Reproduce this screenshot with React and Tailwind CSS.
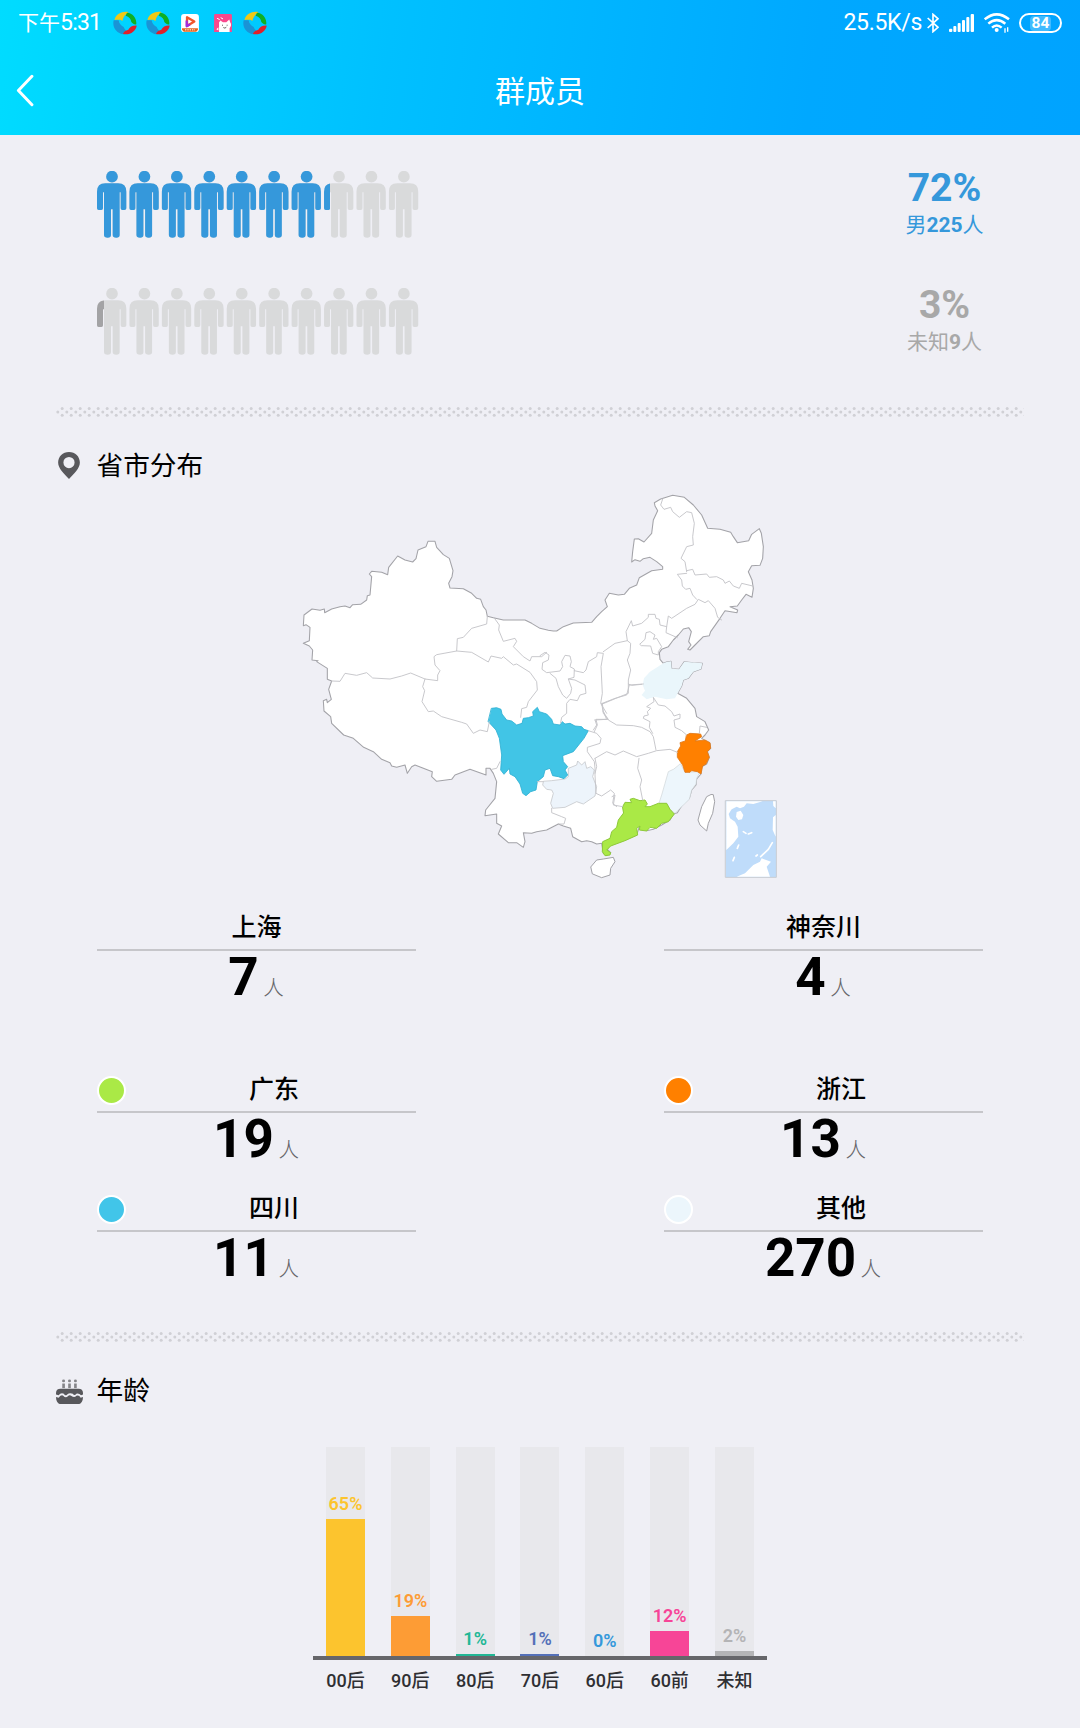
import clsx from "clsx";

const genders = [
  { name: "男", count: 225, percent: 72, width: 233, text: "text-[#3598db]", fill: "text-[#3598db]" },
  { name: "未知", count: 9, percent: 3, width: 6.8, text: "text-[#a8a8a8]", fill: "text-[#a3a3a5]" },
];

const others = [
  { name: "上海", count: 7 },
  { name: "神奈川", count: 4 },
];

const provinces = [
  { name: "广东", count: 19, dot: "bg-[#aae946]" },
  { name: "浙江", count: 13, dot: "bg-[#ff8000]" },
  { name: "四川", count: 11, dot: "bg-[#41c5e9]" },
  { name: "其他", count: 270, dot: "bg-[#ecf6fc]" },
];

const ages = [
  { name: "00后", percent: 65, height: 137, text: "text-[#fcc42e]", bar: "bg-[#fcc42e]" },
  { name: "90后", percent: 19, height: 40, text: "text-[#fd9c35]", bar: "bg-[#fd9c35]" },
  { name: "80后", percent: 1, height: 2, text: "text-[#22b795]", bar: "bg-[#22b795]" },
  { name: "70后", percent: 1, height: 2, text: "text-[#5470b8]", bar: "bg-[#5470b8]" },
  { name: "60后", percent: 0, height: 0, text: "text-[#3598db]", bar: "bg-[#3598db]" },
  { name: "60前", percent: 12, height: 25, text: "text-[#f74597]", bar: "bg-[#f74597]" },
  { name: "未知", percent: 2, height: 5.5, text: "text-[#b4b4b6]", bar: "bg-[#b4b4b6]" },
];

function BallIcon() {
  return (
    <svg viewBox="0 0 72 72" className="h-6 w-6">
      <path d="M2 28C-3 48 10 67 32 70L42 60C38 58 34 54 32 48C24 44 18 38 17 28Z" fill="#1a94d6" />
      <path d="M5 24C10 9 28 -1 47 3C38 9 31 17 28 30C24 26 20 25 5 27Z" fill="#f0c814" />
      <path d="M42 5C58 5 72 22 70 40C65 42 60 39 55 33C54 24 49 17 38 14Z" fill="#0faf23" />
      <path d="M71 44C69 60 50 74 30 69C32 62 38 58 46 56C50 48 60 43 71 44Z" fill="#e0202b" />
    </svg>
  );
}

function VideoIcon() {
  return (
    <svg viewBox="0 0 54 56" className="mx-[3px] h-[18.5px] w-[18px]">
      <rect width="54" height="55" rx="9" fill="#fff" />
      <path d="M18 10V36L40 23Z" fill="none" stroke="#f0562a" strokeWidth="7" strokeLinejoin="round" />
      <path d="M17 20V37L27 31" fill="none" stroke="#a02be0" strokeWidth="7" strokeLinejoin="round" />
      <path d="M3 43H51V48L46 54H8L3 48Z" fill="#e4661e" />
      <path d="M12 48H42" stroke="#fff" strokeWidth="3" strokeDasharray="4 3" />
    </svg>
  );
}

function CatIcon() {
  return (
    <svg viewBox="0 0 54 56" className="mx-[3px] h-[18.5px] w-[18px]">
      <rect width="54" height="56" rx="4" fill="#f9488d" />
      <path d="M15 56V26L19 20L27 25H37L46 17L49 26C52 30 52 34 50 38L47 43V56Z" fill="#fff" />
      <path d="M13 56V50L7 46L13 40Z" fill="#fff" />
      <path d="M9 13L17 17M20 11L27 15" stroke="#fff" strokeWidth="3" />
      <path d="M24 34H27M38 34H41M28 41Q33 45 37 40" fill="none" stroke="#444" strokeWidth="2.5" />
    </svg>
  );
}

function StatusBar() {
  return (
    <div className="flex h-[46px] items-center justify-between pl-[18px] pr-[18px] text-white">
      <div className="flex items-center">
        <span className="w-[95px] whitespace-nowrap text-[21px]">
          下午<span className="text-[23px] tracking-[-0.8px]">5:31</span>
        </span>
        <div className="flex items-center gap-[8.5px]">
          <BallIcon />
          <BallIcon />
          <VideoIcon />
          <CatIcon />
          <BallIcon />
        </div>
      </div>
      <div className="flex items-center">
        <span className="mr-[5px] text-[23px] tracking-[-0.3px]">25.5K/s</span>
        <svg viewBox="0 0 36 60" className="mr-[10px] h-5 w-3" fill="none" stroke="currentColor" strokeWidth="5">
          <path d="M2 15L33 43L18 56V4L33 17L2 45" />
        </svg>
        <svg viewBox="0 0 75 54" className="mr-[10px] h-[18px] w-[25px]" fill="currentColor">
          <rect x="0" y="44" width="10" height="10" rx="3" />
          <rect x="13" y="36" width="9" height="18" rx="3" />
          <rect x="26" y="27" width="9" height="27" rx="3" />
          <rect x="39" y="18" width="9" height="36" rx="3" />
          <rect x="52" y="9" width="9" height="45" rx="3" />
          <rect x="65" y="0" width="10" height="54" rx="3" />
        </svg>
        <svg viewBox="0 0 78 60" className="mr-[9px] h-5 w-[26px]" fill="none" stroke="currentColor" strokeWidth="7.5">
          <path d="M2 19Q38 -11 75 19" />
          <path d="M13 32Q38 11 64 32" />
          <path d="M24 44Q38 31 53 44" />
          <circle cx="38" cy="51" r="6" fill="currentColor" stroke="none" />
          <path d="M63 46V59M71 43V56" strokeWidth="4" />
        </svg>
        <div className="flex h-[20px] w-[43px] items-center justify-center rounded-full border-2 border-white">
          <span className="rounded-sm bg-white/25 px-[2px] text-[15.5px] leading-[15px] font-bold">84</span>
        </div>
      </div>
    </div>
  );
}

function Header() {
  return (
    <header className="h-[135px] bg-[linear-gradient(98deg,#00dcff_0%,#00c0ff_36%,#00a8ff_75%,#00a3ff_100%)]">
      <StatusBar />
      <div className="flex h-[89px] items-center text-white">
        <svg viewBox="0 0 54 100" className="ml-4 h-[33px] w-[18px]" fill="none" stroke="currentColor" strokeWidth="9" strokeLinecap="round" strokeLinejoin="round">
          <path d="M48 7L7 50L48 93" />
        </svg>
        <h1 className="flex-1 pt-[2px] pr-[34px] text-center text-[30px] font-normal">群成员</h1>
      </div>
    </header>
  );
}

function People() {
  return (
    <svg viewBox="0 0 972 201" className="block h-[67px] w-[324px]" fill="currentColor">
      {Array.from({ length: 10 }, (_, i) => (
        <g key={i} transform={`translate(${i * 97.3} 0)`}>
          <circle cx="45" cy="17" r="17.5" />
          <path d="M0 112V62Q0 37 25 37H63Q88 37 88 62V112Q88 117 82 117H76Q71 117 71 112V64H68V192Q68 200 58 200Q47 200 47 192V115H42V192Q42 200 32 200Q21 200 21 192V64H18V112Q18 117 13 117H5Q0 117 0 112Z" />
        </g>
      ))}
    </svg>
  );
}

function GenderRow({ item }) {
  return (
    <div className="flex h-[67px] justify-between">
      <div className="relative h-[67px] w-[324px] text-[#d9dadb]">
        <People />
        <div className={clsx("absolute inset-y-0 left-0 overflow-hidden", item.fill)} style={{ width: item.width }}>
          <People />
        </div>
      </div>
      <div className={clsx("w-[109px] text-center", item.text)}>
        <div className="text-[39px] leading-[35px] font-bold">{item.percent}%</div>
        <div className="text-[21px] leading-[39px]">
          {item.name}
          <span className="font-bold">{item.count}</span>人
        </div>
      </div>
    </div>
  );
}

function Divider({ className }) {
  return (
    <svg className={clsx("mx-auto block h-[10px] w-[968px]", className)}>
      <defs>
        <pattern id="dots" width="9" height="10" patternUnits="userSpaceOnUse">
          <g fill="#d0d0d5">
            <circle cx="1.8" cy="5" r="1.5" />
            <circle cx="6.2" cy="1.6" r="1.5" />
            <circle cx="6.2" cy="8.3" r="1.5" />
          </g>
        </pattern>
      </defs>
      <rect width="968" height="10" fill="url(#dots)" />
    </svg>
  );
}

function SectionTitle({ icon, children, className }) {
  return (
    <div className={clsx("flex h-10 items-center pl-[56px]", className)}>
      <div className="w-[40.5px]">{icon}</div>
      <h2 className="text-[26.7px] leading-10 font-normal text-black">{children}</h2>
    </div>
  );
}

function PinIcon() {
  return (
    <svg viewBox="0 0 66 82" className="mb-[1px] ml-[2px] h-[27px] w-[22px]">
      <path d="M33 0C14 0 0 14 0 32C0 50 18 66 33 82C48 66 66 50 66 32C66 14 52 0 33 0ZM33 15A17 17 0 1 1 33 49A17 17 0 1 1 33 15Z" fill="#58585c" fillRule="evenodd" />
    </svg>
  );
}

function CakeIcon() {
  return (
    <svg viewBox="0 0 82 76" className="mt-[1px] h-[25.5px] w-[27px]" fill="#58585c">
      <path d="M0 46V42Q0 29 14 29H68Q82 29 82 42V46L76 49Q70 42 62 44Q56 52 51 44Q41 40 34 46Q28 52 24 44Q14 40 8 49Z" />
      <path d="M0 54L8 56Q16 46 22 50Q29 58 36 52Q41 46 47 51Q56 58 62 50Q70 47 75 56L82 54C82 70 74 76 66 76H16C8 76 0 70 0 54Z" />
      <g fill="#858589">
        <rect x="19" y="13" width="8" height="14" />
        <rect x="37" y="13" width="8" height="14" />
        <rect x="55" y="13" width="8" height="14" />
        <circle cx="23" cy="5" r="4.5" />
        <circle cx="41" cy="5" r="4.5" />
        <circle cx="59" cy="5" r="4.5" />
      </g>
    </svg>
  );
}

function ChinaMap() {
  return (
    <svg viewBox="0 18 1500 1212" className="mx-auto block h-[404px] w-[500px]" fill="none" strokeLinejoin="round" strokeLinecap="round">
      {/* mainland outline */}
      <path
        fill="#fff"
        stroke="#a3a3a8"
        strokeWidth="3.2"
        d="M125 603L112 598V565L80 545L84 542L66 540L68 510L58 498L40 490L58 482L60 442L48 434L40 437L42 405L66 387L90 391L103 387L104 398L125 387L150 380L165 378L180 383L188 374L212 373L230 360L232 347L240 345L245 290L238 282L245 274L275 277L293 284L296 262L323 228L345 240L368 246L378 236L384 210L408 200L414 184H435L440 202L460 224L478 235L489 272L486 290L476 310L480 324L520 326L545 340L560 355L572 358L580 380L588 390L592 409L610 413L640 420L705 420L725 430L750 445L775 451L790 453L800 453L820 440L850 429L905 427L920 410L935 395L952 380L945 360L958 340L985 345L1003 343L1018 325L1040 315L1048 293L1085 272L1118 268L1118 260L1100 245L1080 232L1060 236L1050 244L1035 239L1025 246L1028 215L1033 177L1045 176L1062 186L1085 160L1090 120L1103 92L1095 78L1093 68L1112 57L1148 46L1183 52L1210 75L1235 105L1253 145L1290 148L1322 157L1330 170L1342 188L1376 182L1385 163L1408 146L1414 160L1420 200L1418 235L1410 256L1385 257L1375 275L1386 300L1390 325L1386 352L1368 343L1355 360L1342 378L1320 380L1343 390L1341 398L1305 392L1290 415L1262 455L1258 467L1240 470L1215 495L1200 510L1193 508L1203 495L1196 485L1204 455L1196 443L1180 447L1165 465L1150 480L1135 500L1115 508L1108 518L1110 538L1120 550L1130 546L1143 544L1145 566L1167 568L1183 545L1210 548L1237 550L1233 567L1210 575L1195 595L1180 600L1175 618L1163 640L1190 655L1215 685L1220 710L1245 725L1256 750L1245 765L1235 775L1260 790L1262 805L1252 815L1258 832L1250 852L1235 860L1233 882L1220 897L1218 915L1205 930L1198 955L1180 970L1162 998L1150 1002L1140 1020L1115 1035L1090 1048L1070 1052L1048 1040L1040 1065L1000 1080L960 1095L952 1108L962 1118L950 1127L940 1120L935 1090L920 1092L905 1085L890 1082L875 1085L848 1070L842 1045L820 1038L805 1032L770 1050L740 1055L725 1060L700 1058L705 1085L700 1102L680 1088L655 1088L625 1062L635 1038L620 1030V1002L585 1007L587 990L615 955L620 905L610 880L600 865H588V885L540 868L495 885L485 898L440 904L425 890L427 875L375 855L365 860L352 880L345 855L320 862L305 858L300 848L275 838L250 815L221 802L190 775L161 765L125 730L122 710L102 693L100 662L110 658L112 668L124 658L116 628Z"
      />

      {/* provinces filled by member count */}
      <path fill="#eaf6fb" d="M1120 550L1080 575L1062 595L1058 615L1065 632L1055 645L1070 658L1095 650L1130 658L1155 655L1163 640L1175 618L1180 600L1195 595L1210 575L1233 567L1237 550L1183 545L1167 568L1145 566L1143 544L1130 546Z" />
      <g transform="translate(330 540)">
        <path fill="#edf4fb" stroke="#c6c9cd" strokeWidth="2.5" d="M430 365L428 375L440 388L455 390L460 400L452 430L458 445L495 442L530 425L550 432L585 408L590 380L578 350L583 330L572 320L560 325L555 305L545 315L533 303L530 315L505 325L505 350L495 357L455 362Z" />
        <path fill="#41c5e6" stroke="#2eb0d2" strokeWidth="2.5" d="M275 145L290 143L303 148L306 162L320 180L335 183L350 195L366 190L370 175L385 173L400 168L398 155L412 142L418 155L440 162L455 178L460 192L480 195L487 185L495 192L510 190L525 198L545 200L552 208L565 212L552 235L520 275L488 287L490 305L503 320L495 330L503 345L492 356L475 350L458 347L450 325L435 330L430 350L412 365L408 390L392 395L378 407L368 400L360 372L345 350L330 342L328 325L312 343L302 330L305 285L298 235L288 210L265 185Z" />
        <path fill="#fff" stroke="#a3a3a8" strokeWidth="3" d="M573 620L590 600L610 597L640 592L645 605L632 625L630 645L605 653L578 642Z" />
      </g>
      <g transform="translate(900 480)">
        <path fill="#edf6fc" stroke="#cfd4d8" strokeWidth="2" d="M272 372L285 397L330 395L320 415L318 432L305 450L298 478L270 505L255 520L240 508L230 490L207 490L215 465L225 430L235 395L250 388Z" />
        <path fill="#aae946" stroke="#8ec93a" strokeWidth="3" d="M98 500L105 487L125 488L120 478L130 475L150 482L165 480L172 492L165 500L180 500L205 490L230 490L240 508L253 522L235 545L215 550L200 565L180 562L170 573L148 570L150 558L140 565L143 585L105 602L62 618L50 630L62 638L60 645L45 647L37 635L38 605L60 595L65 575L80 562L85 540L100 520Z" />
        <path fill="#ff8000" stroke="#e07a1a" strokeWidth="2.5" d="M290 285L300 280L332 282L335 290L315 303L345 300L360 308L362 325L352 335L358 352L348 372L338 378L333 402L322 395L305 392L300 397L285 397L278 375L262 352L262 335L272 318L270 308L285 303Z" />
        <path fill="#fff" stroke="#a3a3a8" strokeWidth="3" d="M370 465L374 485L368 520L355 550L350 573L330 555L324 540L335 500L350 470L362 464Z" />
      </g>

      {/* province borders */}
      <g stroke="#c4c4c8" strokeWidth="2.8">
        <path d="M125 603L150 604L165 580L200 586L230 578L248 594L300 597L335 588L362 579L405 597L443 602V585L450 572L435 555L432 530L440 524L500 513L502 476L520 472L545 445L590 432L592 409" />
        <path d="M405 597L398 620L404 632L396 665L415 695L430 693L455 710L515 727L530 732L550 760L570 750L592 755L598 725" />
        <path d="M500 513L545 517L595 546L603 528L635 535L640 530L670 555L680 552L720 577L740 605L742 630L715 665L710 682L695 686L692 712" />
        <path d="M612 413L628 435L626 450L640 484L675 475L680 484L670 500L700 530L720 543L725 530L755 530L770 517" />
        <g transform="translate(750 0)">
          <path d="M0 527L15 517L27 525L25 540L8 548L6 568L20 578L60 573L68 560L65 545L75 526L90 528L94 545L90 560L103 567L102 592L85 597L95 625L92 640L80 655L68 645L55 620L48 595L30 580" />
          <path d="M85 597L105 600L135 615L138 640L120 645L112 662L90 658L80 670L80 700L65 712L62 728" />
          <path d="M103 572L130 578L138 570L145 545L170 530L172 518L190 520L183 560L187 640L182 670L200 700" />
          <path d="M190 515L225 490L262 482L272 490L270 520L262 540L272 570L265 600V640L240 650L187 672" />
          <path d="M262 482L258 455L274 422L278 438L305 430L325 412V403L345 403L348 415L358 418L360 435L380 440L385 408L395 415L440 385L465 373L475 358L495 368L505 362L525 385L533 412L545 420" />
          <path d="M380 440L378 458L412 473M265 612L275 616L305 613" />
          <path d="M440 280L412 283L425 300L427 318L437 328L450 325L458 345L470 358" />
          <path d="M440 272L458 268L465 285L500 282L508 292L530 290L550 300L555 310L568 303L580 318L598 325L605 310L638 318" />
          <path d="M368 57L362 75L372 88L392 82L398 95L418 112L440 95L455 98L463 130L458 170L460 195L440 200L423 235L435 245L440 275" />
          <path d="M300 492L315 478L318 458L330 455L345 465L340 478L350 475L365 500L355 515V525L338 520L332 498L305 497Z" />
        </g>
        <g transform="translate(330 540)">
          <path d="M565 212L590 220L603 235L600 250L562 262V275L583 305L585 325V345L588 400L605 408L632 390L643 400L638 430L650 440" />
          <path d="M605 130L610 160L625 178H588L592 195L583 215" />
          <path d="M455 445V458L485 470L497 475L492 492L475 492M412 365H430M275 328L290 325L300 305" />
        </g>
        <g transform="translate(900 480)">
          <path d="M37 190L75 175L110 165L118 135L160 132M37 190L40 215L55 240L80 255L130 257L155 262L180 275L190 290L198 330" />
          <path d="M188 280L178 262L180 245L160 235L162 228L175 225L172 215L182 205L170 200L192 185L190 172L205 195L225 198L245 215L252 228L270 222L270 235L252 240L255 262L275 272L290 285" />
          <path d="M15 240L50 238L40 215M15 240L20 255L10 270" />
          <path d="M15 355L50 335L75 345L100 333L140 350L175 340L200 332L240 328L262 337M15 355L20 380L15 400" />
          <path d="M147 355L143 385L155 420L150 440L158 480M66 470L75 465L70 495L98 500" />
          <path d="M328 280L330 258L350 262" />
        </g>
      </g>

      {/* south sea inset */}
      <g transform="translate(900 480)">
        <rect x="407" y="482" width="152" height="230" fill="#bfdcfa" stroke="#c9cdd2" strokeWidth="3" />
        <path fill="#fff" d="M409 484H518L490 492L470 490L462 500L450 505L440 500L425 508L416 522L420 535L435 545L443 560L445 590L430 610L409 630Z" />
        <path fill="#fff" d="M440 516L452 512L460 525L456 538L445 540L438 530ZM549 484H557V505L550 498ZM549 532L557 525V590L548 570ZM440 710L465 700L490 675L510 665L515 655L543 665L530 680L540 710Z" />
        <path stroke="#fff" strokeWidth="5" d="M547 608L535 628L512 650M475 582L485 578M460 575L468 580M442 625L446 615M429 662L433 652M498 648L502 645" />
      </g>
    </svg>
  );
}

function Stat({ item }) {
  return (
    <div className="h-[100px] w-[319px]">
      <div className="flex h-[41px] border-b-2 border-[#c6c6ca]">
        {item.dot && <span className={clsx("mt-[4px] h-[29px] w-[29px] shrink-0 rounded-full border-2 border-white", item.dot)} />}
        <span className={clsx("flex-1 text-center text-[25px] leading-[36px] font-medium text-black", item.dot && "pl-[6px]")}>{item.name}</span>
      </div>
      <div className="flex h-[52px] items-baseline justify-center pr-[1px]">
        <span className="text-[53px] leading-[52px] font-bold text-black">{item.count}</span>
        <span className="ml-[4.5px] text-[20.5px] leading-5 font-light text-[#66666a]">人</span>
      </div>
    </div>
  );
}

function AgeChart() {
  return (
    <div className="mx-auto mt-[37px] w-[454px]">
      <div className="flex h-[213px] justify-between border-b-4 border-[#66666a] px-[13px]">
        {ages.map((age) => (
          <div key={age.name} className="flex w-[39px] flex-col items-center justify-end bg-[#e8e8ec]">
            <span className={clsx("mb-[6px] text-[18px] leading-[19px] font-semibold", age.text)}>{age.percent}%</span>
            <div className={clsx("w-full", age.bar)} style={{ height: age.height }} />
          </div>
        ))}
      </div>
      <div className="mt-[8px] flex justify-between px-[13px]">
        {ages.map((age) => (
          <span key={age.name} className="flex w-[39px] justify-center text-[18px] leading-[26px] font-medium whitespace-nowrap text-[#2f2f33]">
            {age.name}
          </span>
        ))}
      </div>
    </div>
  );
}

export default function App() {
  return (
    <div className="h-[1728px] w-[1080px] overflow-hidden bg-[#efeff5] font-['Roboto','Noto_Sans_CJK_SC',sans-serif]">
      <Header />
      <main>
        <div className="flex flex-col gap-[50px] pt-[36px] pr-[81px] pl-[97px]">
          {genders.map((item) => (
            <GenderRow key={item.name} item={item} />
          ))}
        </div>

        <Divider className="mt-[52px]" />
        <SectionTitle icon={<PinIcon />} className="mt-[29px]">省市分布</SectionTitle>
        <ChinaMap />

        <div className="mt-[20px] flex justify-between px-[97px]">
          {others.map((item) => (
            <Stat key={item.name} item={item} />
          ))}
        </div>
        <div className="mt-[62px] grid grid-cols-[319px_319px] justify-between gap-y-[19px] px-[97px]">
          {provinces.map((item) => (
            <Stat key={item.name} item={item} />
          ))}
        </div>

        <Divider className="mt-[41px]" />
        <SectionTitle icon={<CakeIcon />} className="mt-[29px] mb-[-1px]">年龄</SectionTitle>
        <AgeChart />
      </main>
    </div>
  );
}
